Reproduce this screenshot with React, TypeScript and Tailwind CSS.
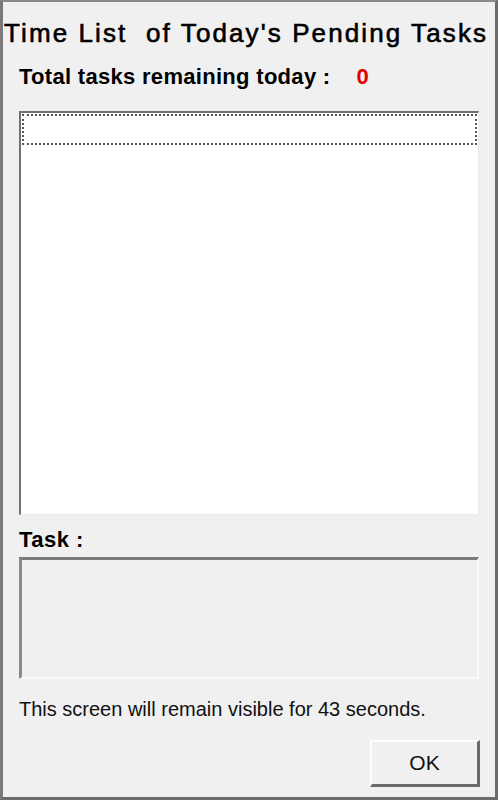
export default function App() {
  return (
    <div
      className="w-[498px] h-[800px] bg-[#f0f0f0] border-t-2 border-l-[3px] border-r-[3px] border-b-[3px] border-t-[#8a8a8a] border-l-[#7a7a7a] border-r-[#6d6d6d] border-b-[#6d6d6d] flex flex-col"
      style={{ fontFamily: '"Liberation Sans", Arial, sans-serif' }}
    >
      {/* Title */}
      <div className="pl-[1px] pt-[16px] h-[46px] text-[26px] leading-[30px] text-black whitespace-pre tracking-[2.1px] [-webkit-text-stroke:0.6px_#000]">
        {"Time List  of Today's Pending Tasks"}
      </div>

      {/* Count */}
      <div className="pl-[16px] mt-[16px] h-[26px] flex items-center text-[22px] leading-[26px] font-bold text-black tracking-[0.3px]">
        <span>Total tasks remaining today :</span>
        <span className="ml-[26px] text-[#e00000]">0</span>
      </div>

      {/* List box */}
      <div className="ml-[16px] mr-[16px] mt-[21px] h-[404px] bg-white border-t-2 border-l-2 border-r border-b border-t-[#707070] border-l-[#707070] border-r-[#e8e8e8] border-b-[#e8e8e8] p-px">
        <div className="h-[31px] border-2 border-dotted border-[#555]" />
      </div>

      {/* Task label */}
      <div className="pl-[16px] mt-[12px] h-[26px] flex items-center text-[22px] leading-[26px] font-bold text-black tracking-[0.5px]">
        Task :
      </div>

      {/* Task box */}
      <div className="ml-[16px] mr-[16px] mt-[4px] h-[122px] bg-[#f0f0f0] border-t-[3px] border-l-[3px] border-r-2 border-b-2 border-t-[#7a7a7a] border-l-[#8a8a8a] border-r-[#fafafa] border-b-[#fafafa]" />

      {/* Timer note */}
      <div className="pl-[16px] mt-[18px] text-[20px] leading-[24px] text-[#111]">
        This screen will remain visible for 43 seconds.
      </div>

      {/* OK */}
      <div className="flex justify-end pr-[15px] mt-[19px]">
        <button className="w-[110px] h-[47px] bg-[#f0f0f0] border-t-2 border-l-2 border-r-[3px] border-b-[3px] border-t-[#fcfcfc] border-l-[#fcfcfc] border-r-[#6a6a6a] border-b-[#6a6a6a] text-[21px] text-[#111] flex items-center justify-center">
          OK
        </button>
      </div>
    </div>
  );
}
